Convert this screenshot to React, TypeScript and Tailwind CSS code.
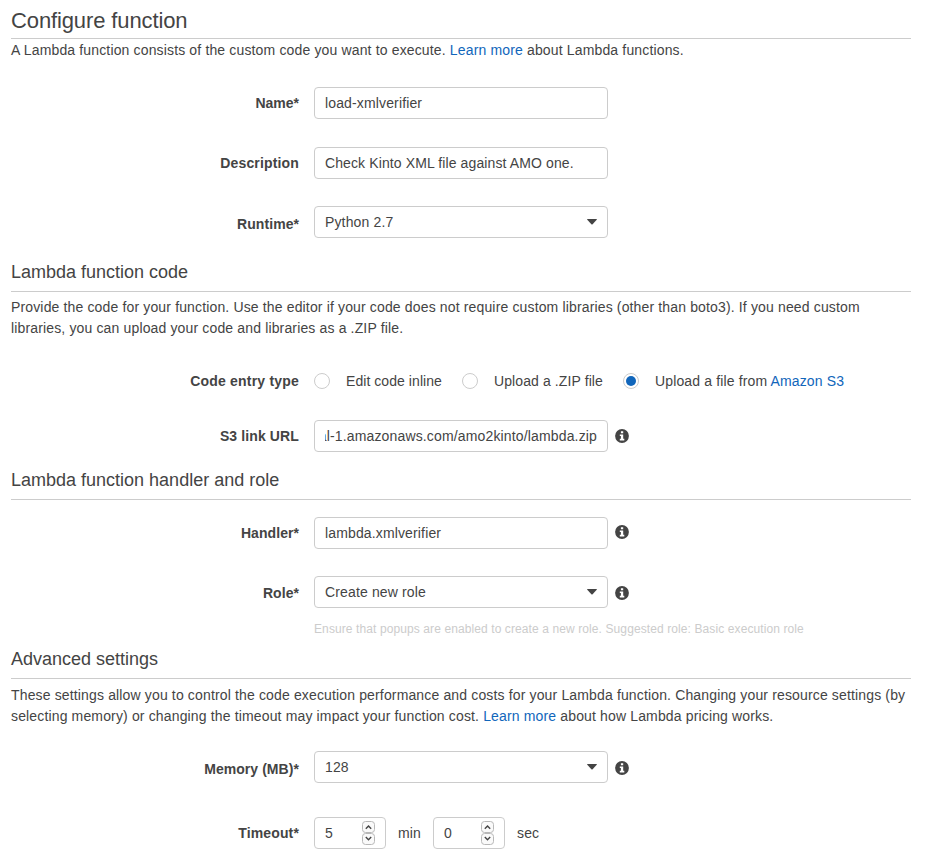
import type { ReactNode } from "react";

function Heading({ className, children }: { className: string; children: ReactNode }) {
  return (
    <h2 className={`border-b border-[#cccccc] text-[18px] leading-[21px] font-normal tracking-normal ${className}`}>
      {children}
    </h2>
  );
}

function Row({
  label,
  className,
  labelClass = "tracking-[0.06px]",
  children,
}: {
  label: string;
  className: string;
  labelClass?: string;
  children: ReactNode;
}) {
  return (
    <div className={`flex items-center ${className}`}>
      <div className={`mr-[15px] w-[288px] shrink-0 text-right font-bold ${labelClass}`}>{label}</div>
      {children}
    </div>
  );
}

const box = "flex h-8 shrink-0 items-center rounded border border-[#cccccc] bg-white px-2.5";

function Field({ children }: { children: ReactNode }) {
  return <div className={`${box} w-[294px]`}>{children}</div>;
}

function Select({ children }: { children: ReactNode }) {
  return (
    <div className={`${box} w-[294px] justify-between`}>
      <span>{children}</span>
      <svg width="10" height="6" viewBox="0 0 10 6" fill="#444444">
        <path d="M0.6 0h8.8q.9 0 .3.7L5.6 5.2q-.6.6-1.2 0L.3.7Q-.3 0 .6 0z" />
      </svg>
    </div>
  );
}

function Info({ className = "" }: { className?: string }) {
  return (
    <svg className={`ml-[7px] shrink-0 ${className}`} width="14" height="14" viewBox="0 0 14 14">
      <circle cx="7" cy="7" r="6.9" fill="#444444" />
      <path d="M5.9 2.2h2.3v2H5.9zM4.8 5.4h3.4v4.3h1.1v1.7H4.8V9.7h1.1V7.1H4.8z" fill="#fff" />
    </svg>
  );
}

function Radio({ checked = false }: { checked?: boolean }) {
  return (
    <span className="mb-px flex size-4 shrink-0 items-center justify-center rounded-full border border-[#cccccc]">
      {checked && <span className="size-2.5 rounded-full bg-[#1166bb]" />}
    </span>
  );
}

function StepButton({ path }: { path: string }) {
  return (
    <svg width="13" height="12" viewBox="0 0 13 12" fill="none">
      <rect x="0.5" y="0.5" width="12" height="11" rx="3" fill="#fafafa" stroke="#b8b8b8" />
      <path d={path} stroke="#444444" strokeWidth="1.4" />
    </svg>
  );
}

function Stepper({ value }: { value: string }) {
  return (
    <div className={`${box} w-[72px] justify-between`}>
      <span>{value}</span>
      <span className="flex flex-col">
        <StepButton path="M3.8 7.8 6.5 5.1 9.2 7.8" />
        <StepButton path="M3.8 4 6.5 6.7 9.2 4" />
      </span>
    </div>
  );
}

function Link({ children }: { children: ReactNode }) {
  return <a className="text-[#1166bb]">{children}</a>;
}

export default function App() {
  return (
    <main className="h-[858px] w-[929px] overflow-hidden bg-white pr-[14px] pl-[11px] font-['Liberation_Sans',Arial,sans-serif] text-[14px] leading-[21px] tracking-[0.14px] text-[#444444]">
      <h1 className="mr-1 h-[39px] border-b border-[#cccccc] pt-2 text-[22px] leading-[25px] font-normal tracking-[-0.12px]">
        Configure function
      </h1>
      <p className="pt-px tracking-[0.15px]">
        A Lambda function consists of the custom code you want to execute. <Link>Learn more</Link> about Lambda
        functions.
      </p>
      <Row label="Name*" className="mt-[26px]" labelClass="tracking-normal">
        <Field>load-xmlverifier</Field>
      </Row>
      <Row label="Description" className="mt-7" labelClass="tracking-[0.16px]">
        <Field>
          <span className="tracking-[0.11px]">Check Kinto XML file against AMO one.</span>
        </Field>
      </Row>
      <Row label="Runtime*" className="mt-[27px]" labelClass="pt-1 tracking-[0.06px]">
        <Select>Python 2.7</Select>
      </Row>

      <Heading className="mt-6 mr-1 h-[30px]">Lambda function code</Heading>
      <p className="pt-[5px] tracking-[0.147px]">
        Provide the code for your function. Use the editor if your code does not require custom libraries (other than
        boto3). If you need custom
        <br />
        libraries, you can upload your code and libraries as a .ZIP file.
      </p>
      <Row label="Code entry type" className="mt-8 h-[21px]" labelClass="tracking-[0.2px]">
        <Radio />
        <span className="mr-5 ml-4 w-24 tracking-[0.06px] whitespace-nowrap">Edit code inline</span>
        <Radio />
        <span className="mr-5 ml-4 w-[109px] tracking-[0.1px] whitespace-nowrap">Upload a .ZIP file</span>
        <Radio checked />
        <span className="ml-4">
          Upload a file from <Link>Amazon S3</Link>
        </span>
      </Row>
      <Row label="S3 link URL" className="mt-7" labelClass="tracking-[0.12px]">
        <Field>
          <div className="flex w-full justify-end overflow-hidden tracking-[0.15px] whitespace-nowrap">
            <span>al-1.amazonaws.com/amo2kinto/lambda.zip</span>
          </div>
        </Field>
        <Info />
      </Row>

      <Heading className="mt-[18px] mr-1 h-[30px]">Lambda function handler and role</Heading>
      <Row label="Handler*" className="mt-[17px]">
        <Field>lambda.xmlverifier</Field>
        <Info className="mb-0.5" />
      </Row>
      <Row label="Role*" className="mt-[27px]" labelClass="pt-0.5 tracking-[0.06px]">
        <Select>Create new role</Select>
        <Info className="mt-0.5" />
      </Row>
      <p className="mt-3 ml-[303px] h-[18px] text-[12px] leading-[18px] tracking-[0.1px] text-[#cccccc]">
        Ensure that popups are enabled to create a new role. Suggested role: Basic execution role
      </p>

      <Heading className="mt-[11px] mr-1 h-[30px]">Advanced settings</Heading>
      <p className="pt-[6px] tracking-[0.147px]">
        These settings allow you to control the code execution performance and costs for your Lambda function. Changing
        your resource settings (by
        <br />
        selecting memory) or changing the timeout may impact your function cost. <Link>Learn more</Link> about how
        Lambda pricing works.
      </p>
      <Row label="Memory (MB)*" className="mt-6" labelClass="pt-1 tracking-[0.06px]">
        <Select>128</Select>
        <Info className="mt-0.5" />
      </Row>
      <Row label="Timeout*" className="mt-[34px]" labelClass="tracking-[0.14px]">
        <Stepper value="5" />
        <span className="mx-3 w-[23px]">min</span>
        <Stepper value="0" />
        <span className="ml-3">sec</span>
      </Row>
    </main>
  );
}
